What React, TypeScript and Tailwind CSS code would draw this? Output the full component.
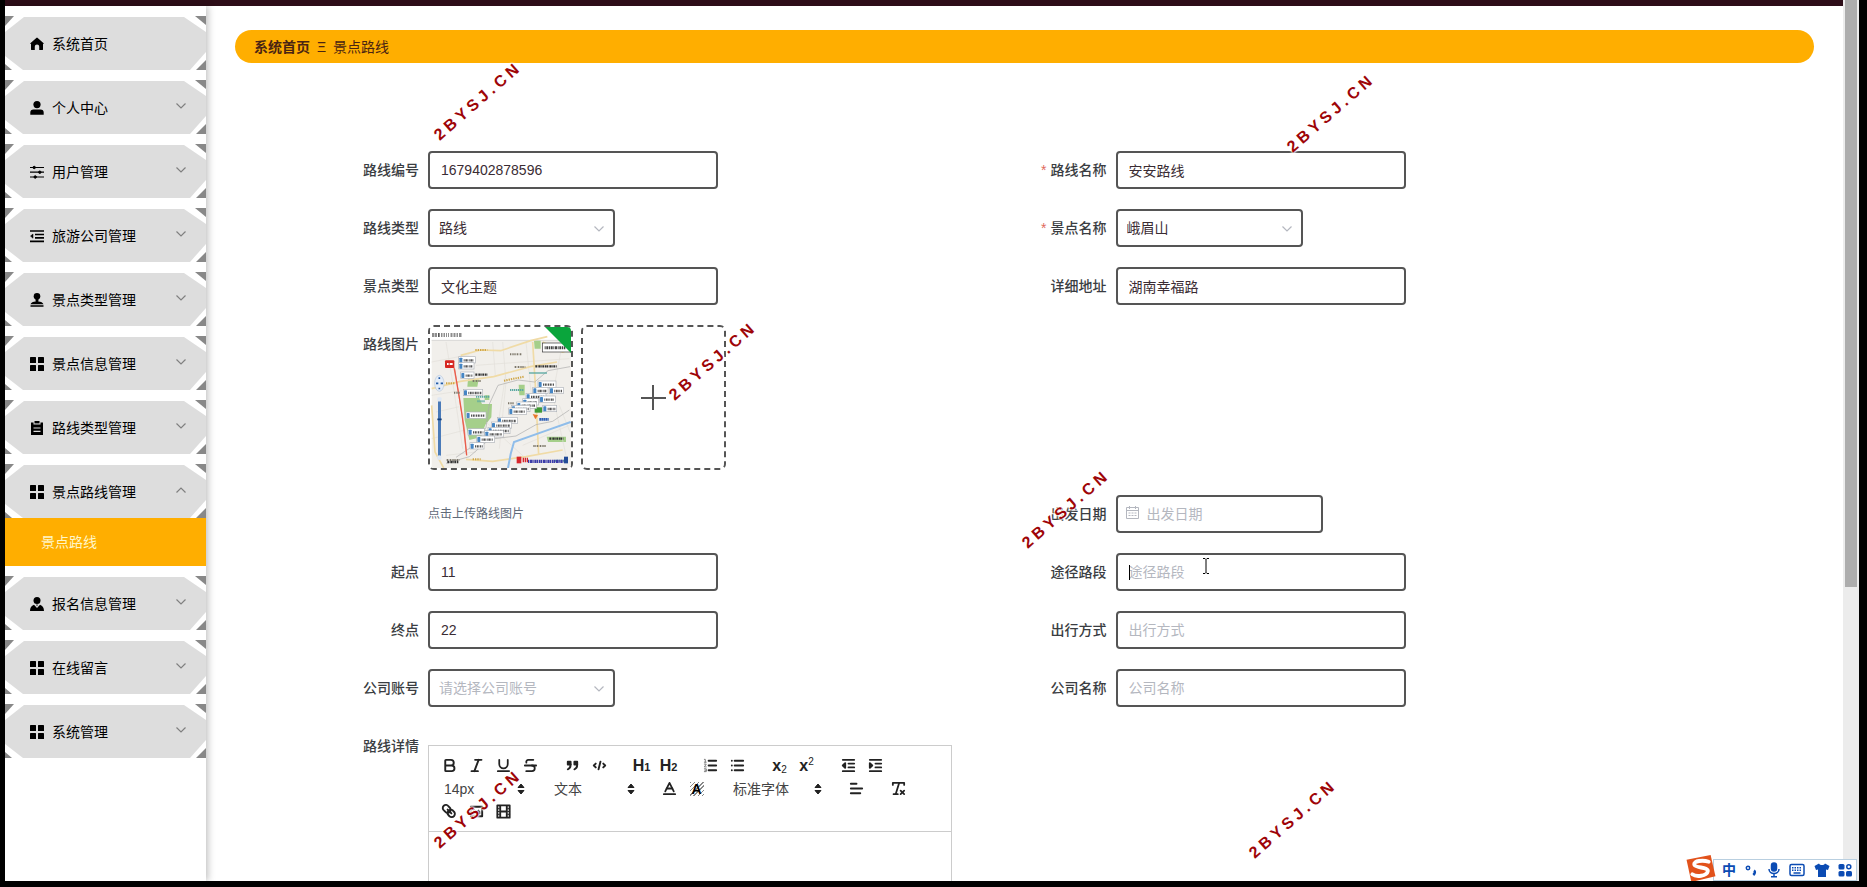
import React from "react";
import {
  Baseline,
  Bold,
  Italic,
  RemoveFormatting,
  Strikethrough,
  Underline,
} from "lucide-react";

interface MenuItem {
  title: string;
  icon: React.ReactNode;
  open?: boolean;
  children?: string[];
  plain?: boolean;
}

const HomeIcon = () => (
  <svg viewBox="0 0 14 14" className="size-[14px] fill-black">
    <path d="M6.300.900a1.100 1.100 0 0 1 1.400 0l5.700 5c.5.500.3 1-.4 1H13v5.300c0 .6-.3.900-.9.900H9.200V9.600a2.200 2.200 0 0 0-4.400 0v3.500H1.900c-.6 0-.9-.3-.9-.9V6.900H.9c-.6 0-.8-.5-.3-1z" />
  </svg>
);

const UserIcon = () => (
  <svg viewBox="0 0 14 14" className="size-[14px] fill-black">
    <circle cx="7" cy="3.600" r="3.600" />
    <path d="M.3 13.800v-2.200A3.200 3.200 0 0 1 3.500 8.400h7a3.200 3.200 0 0 1 3.200 3.200v2.200z" />
  </svg>
);

const OperationIcon = () => (
  <svg viewBox="0 0 14 14" className="size-[14px] fill-black stroke-black">
    <path d="M0 2.500h14M0 7.200h14M0 12h14" strokeWidth="1.200" />
    <circle cx="4.200" cy="2.500" r="1.200" />
    <circle cx="9.800" cy="7.200" r="1.200" />
    <circle cx="5.200" cy="12" r="1.200" />
  </svg>
);

const FoldIcon = () => (
  <svg viewBox="0 0 14 14" className="size-[14px] fill-black stroke-black">
    <path d="M0 2h14M5 5.500h9M5 8.800h9M0 12.300h14" strokeWidth="1.700" />
    <path d="M3 5v4.200L.5 7.100z" strokeWidth="0.500" />
  </svg>
);

const StampIcon = () => (
  <svg viewBox="0 0 14 14" className="size-[14px] fill-black">
    <circle cx="7" cy="3.300" r="3.300" />
    <path d="M5.300 5h3.400l-.4 3.400c2.700.3 4.600 1 5.200 2.800H.5C1.100 9.400 3 8.700 5.700 8.400zM.5 12.300h13v1.500H.5z" />
  </svg>
);

const GridIcon = () => (
  <svg viewBox="0 0 14 14" className="size-[14px] fill-black">
    <rect x="0" y="0" width="6" height="6" rx="0.600" />
    <rect x="8" y="0" width="6" height="6" rx="0.600" />
    <rect x="0" y="8" width="6" height="6" rx="0.600" />
    <rect x="8" y="8" width="6" height="6" rx="0.600" />
  </svg>
);

const OrderIcon = () => (
  <svg viewBox="0 0 14 14" className="size-[14px]">
    <path d="M1 1.500h2.500V3.500h7V1.500H13V14H1z" fill="#000" />
    <rect x="4.500" y="0" width="5" height="2.400" fill="#000" />
    <path d="M3.500 7h7M3.500 10.300h7" stroke="#ddd" strokeWidth="1.200" />
  </svg>
);

const CustomIcon = () => (
  <svg viewBox="0 0 14 14" className="size-[14px] fill-black">
    <circle cx="7" cy="3.500" r="3.500" />
    <path d="M0 14c0-3.200 1.300-5.300 4-6.200L7 11l3-3.200c2.700.9 4 3 4 6.200z" />
    <path d="M6.200 7.600h1.600L7 9.600z" />
  </svg>
);

const menu: MenuItem[] = [
  { title: "系统首页", icon: <HomeIcon />, plain: true },
  { title: "个人中心", icon: <UserIcon /> },
  { title: "用户管理", icon: <OperationIcon /> },
  { title: "旅游公司管理", icon: <FoldIcon /> },
  { title: "景点类型管理", icon: <StampIcon /> },
  { title: "景点信息管理", icon: <GridIcon /> },
  { title: "路线类型管理", icon: <OrderIcon /> },
  { title: "景点路线管理", icon: <GridIcon />, open: true, children: ["景点路线"] },
  { title: "报名信息管理", icon: <CustomIcon /> },
  { title: "在线留言", icon: <GridIcon /> },
  { title: "系统管理", icon: <GridIcon /> },
];

const Chevron = ({ className }: { className: string }) => (
  <svg viewBox="0 0 12 8" fill="none" strokeWidth="1.200" className={className}>
    <path d="M1.500 1.500 6 6l4.500-4.500" />
  </svg>
);

const Sidebar = () => (
  <aside className="relative z-10 w-[201px] shrink-0 bg-white shadow-[2px_0_7px_rgba(0,0,0,0.25)]">
    <ul className="flex flex-col gap-[10px] pt-[10px]">
      {menu.map((item) => (
        <li key={item.title}>
          <div className="h-[54px] bg-[#888]">
            <div className="h-full bg-white [clip-path:polygon(9px_0,calc(100%-11px)_0,100%_9px,100%_calc(100%-10px),calc(100%-10px)_100%,7px_100%,0_calc(100%-6px),0_10px)]">
              <button
                type="button"
                className="flex h-full w-full items-center bg-[#ddd] pt-px pr-[19px] pl-[25px] text-sm text-black [clip-path:polygon(19px_1px,calc(100%-22px)_1px,100%_16px,100%_calc(100%-18px),calc(100%-16px)_100%,18px_100%,0_calc(100%-14px),0_16px)]"
              >
                {item.icon}
                <span className="ml-2">{item.title}</span>
                {!item.plain && (
                  <Chevron
                    className={
                      item.open
                        ? "mb-1 ml-auto h-2 w-3 rotate-180 stroke-[#808080]"
                        : "mb-1 ml-auto h-2 w-3 stroke-[#808080]"
                    }
                  />
                )}
              </button>
            </div>
          </div>
          {item.children?.map((child) => (
            <a
              key={child}
              href="#route"
              className="flex h-[48px] items-center bg-[#ffae00] pl-9 text-sm text-[#fff6c8]"
            >
              {child}
            </a>
          ))}
        </li>
      ))}
    </ul>
  </aside>
);

interface FieldProps {
  id: string;
  label: string;
  required?: boolean;
  children: React.ReactNode;
}

const Field: React.FC<FieldProps> = ({ id, label, required, children }) => (
  <div className="mb-5 flex items-start">
    <label
      htmlFor={id}
      className="w-[92px] shrink-0 pr-[9px] text-right text-sm leading-[38px] font-medium whitespace-nowrap text-[#3a3d42]"
    >
      {required && <span className="mr-1 text-[#e06a5c]">*</span>}
      {label}
    </label>
    {children}
  </div>
);

const inputClass =
  "h-[38px] rounded border-2 border-[#555] bg-white px-[11px] text-sm text-[#3a2c33] outline-none placeholder:text-[#b4b7bf]";

interface TextProps {
  id: string;
  label: string;
  value?: string;
  required?: boolean;
}

const TextField: React.FC<TextProps> = ({ id, label, value, required }) => (
  <Field id={id} label={label} required={required}>
    <input
      id={id}
      type="text"
      defaultValue={value}
      placeholder={label}
      className={`${inputClass} w-[290px]`}
    />
  </Field>
);

const SelectField: React.FC<TextProps> = ({ id, label, value, required }) => (
  <Field id={id} label={label} required={required}>
    <div className="relative">
      <select
        id={id}
        className={
          value
            ? "h-[38px] w-[187px] appearance-none rounded border-2 border-[#555] bg-white px-[9px] text-sm text-[#3a2c33]"
            : "h-[38px] w-[187px] appearance-none rounded border-2 border-[#555] bg-white px-[9px] text-sm text-[#b4b7bf]"
        }
      >
        <option>{value || "请选择公司账号"}</option>
      </select>
      <Chevron className="pointer-events-none absolute top-[16px] right-[10px] h-2 w-3 stroke-[#b4b7bf]" />
    </div>
  </Field>
);

// x, y, width of the stop labels on the map
const stops = [
  [98, 104, 50], [98, 122, 46], [104, 150, 40], [112, 202, 58], [120, 270, 60],
  [336, 177, 54], [320, 196, 46], [370, 196, 42], [300, 214, 60], [290, 230, 48],
  [340, 222, 48], [272, 240, 60], [256, 250, 56], [350, 250, 42], [248, 258, 54],
  [214, 286, 60], [196, 300, 60], [126, 320, 50], [186, 316, 66], [176, 326, 56],
  [152, 342, 54], [132, 362, 42],
];

const MapPicture = () => (
  <svg viewBox="12 15 423 423" preserveAspectRatio="none" className="h-full w-full">
    <rect x="12" y="15" width="423" height="423" fill="#fff" />
    <rect x="17" y="54" width="418" height="384" fill="#f1efeb" />
    <path d="M17 55h400" stroke="#ccc" strokeWidth="2" />
    <path
      d="M19 39h6M28 39h5M36 39h6M46 39h3M53 39h3M60 39h2M66 39h2M74 39h5M83 39h5M92 39h4M100 39h6"
      stroke="#555"
      strokeWidth="12"
      strokeDasharray="3 1"
    />
    <g fill="#a5cf8a">
      <path d="M112 228h48l8 18h30l-2 40-18 22-14 38-34 8-14-60z" />
      <path d="M126 172h32l-4 22h-30zM278 188h18v32h-16zM324 56h20v24h-18zM362 344h58v16h-54zM176 220h14v14h-14z" />
    </g>
    <g stroke="#e3e0da" strokeWidth="2" fill="none">
      <path d="M17 120 130 98M30 270l70-16M60 60l20 120 30 200M230 60l10 120-20 200M300 60l16 160M17 350l100-26M180 300l120 110M410 60l-30 160 40 180" />
      <path d="M200 60l8 100M17 220l90-14M150 130l280-20M240 150l-30 200M290 370l140-60M60 400l90-10M400 250l32 80" />
    </g>
    <g stroke="#f0dba6" strokeWidth="5" fill="none">
      <path d="M104 100l60-16 60 2 90-30 50-12M17 200l86-22 100-14 110-30 80-14M17 250l10 140 26 48M120 412l80 6 100-14 110-20M320 60l8 130 10 210M350 60l60 30 22-8" />
    </g>
    <g stroke="#aaa" strokeWidth="2" fill="none">
      <path d="M90 406l60-40 30-50 10-70 26-56 60-16 50 6 40-34 66-12" />
      <path d="M60 424l70-20 60-52 80-10 60-34 50-10 50-34" />
    </g>
    <path d="M434 300l-80 28-90 32-10 36-8 42" stroke="#8fbdea" strokeWidth="6" fill="none" />
    <path d="M84 136l16 90 14 90 8 84" stroke="#ef7565" strokeWidth="4" fill="none" />
    <path d="M86 140l22 140 14 120" stroke="#e34a38" strokeWidth="2" fill="none" />
    <g stroke="#7d776a" strokeWidth="6" strokeDasharray="4 2 2 2">
      <path d="M252 97h34M266 135h32M140 177h26M84 212h20M322 372h38M246 244h20M62 414h40" />
    </g>
    <g stroke="#333" strokeWidth="7" strokeDasharray="5 2 3 1">
      <path d="M328 133h64M148 158h36M370 350h42M64 420h34" />
    </g>
    <path d="M148 84h36M234 176l60-12M60 184h26M140 412h24" stroke="#cfa545" strokeWidth="6" strokeDasharray="4 3" />
    <path d="M150 224h40M154 238h22M252 204h40M310 153h54M386 416h28" stroke="#5aa8a2" strokeWidth="6" strokeDasharray="4 2" />
    <path d="M340 292h28" stroke="#2f5fb5" strokeWidth="8" strokeDasharray="5 1" />
    <rect x="57" y="115" width="28" height="23" rx="3" fill="#d62722" />
    <path d="M63 126h5M71 126h9" stroke="#fff" strokeWidth="6" />
    <rect x="326" y="256" width="22" height="16" fill="#3f9a35" />
    <path d="M320 276l16 4-8 12z" fill="#e8772c" />
    {stops.map(([x, y, w]) => (
      <g key={`${x}-${y}`}>
        <rect x={x} y={y} width={w} height="19" fill="#fff" stroke="#b0b4ba" strokeWidth="2" />
        <rect x={x + 2} y={y + 3} width="9" height="15" rx="2" fill="#4686c4" />
        <path
          d={`M${x + 15} ${y + 11}h${w - 19}`}
          stroke="#555"
          strokeWidth="7"
          strokeDasharray="3 2 5 1 2 2"
        />
      </g>
    ))}
    <rect x="349" y="63" width="90" height="27" fill="#fff" stroke="#333" strokeWidth="2" />
    <path d="M356 77h62" stroke="#444" strokeWidth="9" strokeDasharray="3 2 6 2" />
    <ellipse cx="40" cy="184" rx="14" ry="24" fill="#e5edf7" stroke="#8aa3c4" />
    <path d="M40 166v5M40 197v5M30 184h7M44 184h7" stroke="#225ba8" strokeWidth="5" />
    <rect x="36" y="238" width="9" height="164" fill="#4a7ab8" />
    <rect x="34" y="226" width="13" height="12" rx="4" fill="#dfe8f4" />
    <path d="M34 292h13" stroke="#123f7c" strokeWidth="5" />
    <circle cx="40" cy="407" r="7" fill="#dfe8f4" />
    <rect x="272" y="404" width="14" height="20" fill="#d8262c" />
    <path d="M290 414h16" stroke="#d8262c" strokeWidth="14" strokeDasharray="4 2" />
    <path d="M306 418h106" stroke="#3b3ba8" strokeWidth="10" strokeDasharray="4 2 6 1" />
    <rect x="414" y="404" width="12" height="20" fill="#234b96" />
    <path d="M357 15h78v78z" fill="#0aa53c" />
  </svg>
);

const RouteImages = () => (
  <div className="flex gap-2">
    <div className="size-[145px] overflow-hidden rounded-md border-2 border-dashed border-[#555]">
      <MapPicture />
    </div>
    <button
      id="images"
      type="button"
      aria-label="上传"
      className="flex size-[145px] items-center justify-center rounded-md border-2 border-dashed border-[#555]"
    >
      <svg viewBox="0 0 25 25" className="size-[25px] stroke-[#555]" strokeWidth="2">
        <path d="M12 0v25M0 13h25" />
      </svg>
    </button>
  </div>
);

const ToolButton = ({ name, children }: { name: string; children: React.ReactNode }) => (
  <button
    type="button"
    aria-label={name}
    className="flex h-[23px] w-[27px] items-center justify-center text-[#222]"
  >
    {children}
  </button>
);

const Glyph = ({ children }: { children: React.ReactNode }) => (
  <svg
    viewBox="0 0 18 18"
    fill="none"
    stroke="currentColor"
    strokeWidth="2"
    strokeLinecap="round"
    strokeLinejoin="round"
    className="size-[17px]"
  >
    {children}
  </svg>
);

const Picker = ({ label, name, className }: { label: string; name: string; className: string }) => (
  <div className={`relative h-[23px] ${className}`}>
    <select
      aria-label={name}
      className="h-full w-full appearance-none bg-white pl-2 text-sm text-[#444]"
    >
      <option>{label}</option>
    </select>
    <svg viewBox="0 0 8 12" className="absolute top-[6px] right-[6px] h-3 w-2 fill-[#222]">
      <path d="M4 1 7 4.500H1zM4 11 7 7.500H1z" stroke="#222" strokeLinejoin="round" />
    </svg>
  </div>
);

const Editor = () => (
  <div className="mt-[18px] w-[524px] border border-[#ccc]">
    <div className="flex flex-wrap gap-x-[15px] border-b border-[#ccc] px-[7px] py-2">
      <div className="flex">
        <ToolButton name="加粗"><Bold size={17} strokeWidth={2.7} /></ToolButton>
        <ToolButton name="斜体"><Italic size={17} strokeWidth={2.7} /></ToolButton>
        <ToolButton name="下划线"><Underline size={17} strokeWidth={2.5} /></ToolButton>
        <ToolButton name="删除线"><Strikethrough size={17} strokeWidth={2.5} /></ToolButton>
      </div>
      <div className="flex">
        <ToolButton name="引用">
          <Glyph>
            <path d="M4 5h3v3H4zM11 5h3v3h-3z" fill="currentColor" />
            <path d="M7 8c0 4-3 5-3 5M14 8c0 4-3 5-3 5" />
          </Glyph>
        </ToolButton>
        <ToolButton name="代码">
          <Glyph>
            <path d="M5 7 3 9l2 2M13 7l2 2-2 2M10 5 8 13" />
          </Glyph>
        </ToolButton>
      </div>
      <div className="flex">
        <ToolButton name="标题一">
          <span className="text-base leading-none font-bold">H</span>
          <span className="pt-1 text-[11px] leading-none font-bold">1</span>
        </ToolButton>
        <ToolButton name="标题二">
          <span className="text-base leading-none font-bold">H</span>
          <span className="pt-1 text-[11px] leading-none font-bold">2</span>
        </ToolButton>
      </div>
      <div className="flex">
        <ToolButton name="有序列表">
          <Glyph>
            <path d="M7 4h8M7 9h8M7 14h8" />
            <path
              d="M2.500 2.500h1v3M2.500 5.500h2M2.500 7.500h2l-2 3h2M2.500 12.500h2v3h-2M3 14h1.500"
              strokeWidth="1"
              stroke="#777"
            />
          </Glyph>
        </ToolButton>
        <ToolButton name="无序列表">
          <Glyph>
            <path d="M6 4h9M6 9h9M6 14h9M3 4h0M3 9h0M3 14h0" />
          </Glyph>
        </ToolButton>
      </div>
      <div className="flex">
        <ToolButton name="下标">
          <span className="text-base leading-none font-bold">x</span>
          <span className="pt-2 text-[10px] leading-none">2</span>
        </ToolButton>
        <ToolButton name="上标">
          <span className="text-base leading-none font-bold">x</span>
          <span className="pb-2 text-[10px] leading-none">2</span>
        </ToolButton>
      </div>
      <div className="flex">
        <ToolButton name="减少缩进">
          <Glyph>
            <path d="M3 3h12M3 15h12M9 7h6M9 11h6" />
            <path d="M5.500 6.500v5L3 9z" fill="currentColor" />
          </Glyph>
        </ToolButton>
        <ToolButton name="增加缩进">
          <Glyph>
            <path d="M3 3h12M3 15h12M9 7h6M9 11h6" />
            <path d="M3 6.500v5L5.500 9z" fill="currentColor" />
          </Glyph>
        </ToolButton>
      </div>
      <Picker name="字号" label="14px" className="w-[95px]" />
      <Picker name="标题" label="文本" className="w-[95px]" />
      <div className="flex">
        <ToolButton name="文字颜色">
          <Baseline size={17} strokeWidth={2.5} />
        </ToolButton>
        <ToolButton name="背景颜色">
          <span className="flex size-[14px] items-center justify-center bg-[repeating-linear-gradient(135deg,#888_0_1px,#fff_1px_3px)] text-sm leading-none font-bold text-black">
            A
          </span>
        </ToolButton>
      </div>
      <Picker name="字体" label="标准字体" className="w-[103px]" />
      <ToolButton name="对齐">
        <Glyph>
          <path d="M3 9h12M3 14h10M3 4h6" />
        </Glyph>
      </ToolButton>
      <ToolButton name="清除格式"><RemoveFormatting size={17} strokeWidth={2.5} /></ToolButton>
      <div className="flex">
        <ToolButton name="链接">
          <Glyph>
            <path d="M7 7l4 4" />
            <path d="M8.900 4.600a3.500 3.500 0 0 1 .4 5A3.500 3.500 0 0 1 4.300 9l-1-1A3.300 3.300 0 1 1 8 3.600z" />
            <path d="M13.600 9a3.300 3.300 0 1 1-4.600 5l-1-1a3.400 3.400 0 0 1 4.600-5z" />
          </Glyph>
        </ToolButton>
        <ToolButton name="图片">
          <Glyph>
            <rect x="3" y="4" width="12" height="10" />
            <circle cx="6" cy="7" r="1" fill="currentColor" strokeWidth="0" />
            <path d="M5 12v-1l2-2 1 1 3-3 2 2v3z" fill="currentColor" strokeWidth="0" />
          </Glyph>
        </ToolButton>
        <ToolButton name="视频">
          <Glyph>
            <path d="M2.500 2.500h13v13h-13z" />
            <path d="M5.500 3v12M12.500 3v12M6 9h6" />
            <path d="M2.500 6h2M2.500 9h2M2.500 12h2M13.500 6h2M13.500 9h2M13.500 12h2" strokeWidth="1" />
          </Glyph>
        </ToolButton>
      </div>
    </div>
    <div id="detail" contentEditable suppressContentEditableWarning className="h-[200px] outline-none" />
  </div>
);

const RouteForm = () => (
  <form className="mt-[88px] grid grid-cols-2 pr-[103px] pl-[101px]">
    <TextField id="code" label="路线编号" value="1679402878596" />
    <TextField id="name" label="路线名称" value="安安路线" required />
    <SelectField id="type" label="路线类型" value="路线" />
    <SelectField id="spot" label="景点名称" value="峨眉山" required />
    <TextField id="spotType" label="景点类型" value="文化主题" />
    <TextField id="address" label="详细地址" value="湖南幸福路" />
    <div className="col-span-2 h-[170px]">
      <Field id="images" label="路线图片">
        <RouteImages />
      </Field>
    </div>
    <p className="ml-[92px] text-xs leading-[38px] text-[#606a78]">点击上传路线图片</p>
    <Field id="date" label="出发日期">
      <div className="relative">
        <input
          id="date"
          type="text"
          placeholder="出发日期"
          className="h-[38px] w-[207px] rounded border-2 border-[#555] bg-white pl-[29px] text-sm outline-none placeholder:text-[#b4b7bf]"
        />
        <svg
          viewBox="0 0 13 13"
          fill="none"
          className="absolute top-[11px] left-[10px] size-[13px] stroke-[#b4b7bf]"
        >
          <path d="M.5 1.500h12v11H.5zM.5 4.500h12M3.500 0v3M9.500 0v3" />
          <path d="M2.500 7h8M2.500 9.500h8" strokeDasharray="2 1" />
        </svg>
      </div>
    </Field>
    <TextField id="start" label="起点" value="11" />
    <Field id="path" label="途径路段">
      <div className="relative">
        <input id="path" type="text" placeholder="途径路段" className={`${inputClass} w-[290px]`} />
        <span className="absolute top-3 left-[13px] h-[15px] w-px bg-black" />
        <svg
          viewBox="0 0 8 16"
          fill="none"
          className="absolute top-[5px] left-[86px] h-4 w-2 stroke-black"
        >
          <path d="M1 .5h2l1 1 1-1h2M4 1.500v13M1 15.500h2l1-1 1 1h2" />
        </svg>
      </div>
    </Field>
    <TextField id="end" label="终点" value="22" />
    <TextField id="travel" label="出行方式" />
    <SelectField id="account" label="公司账号" />
    <TextField id="company" label="公司名称" />
    <Field id="detail" label="路线详情">
      <Editor />
    </Field>
  </form>
);

const InputMethodBar = () => (
  <div className="absolute right-[2px] bottom-0 z-20 flex h-[22px] w-[144px] items-center justify-between border border-[#b9cfe0] bg-white pr-1 pl-2 text-[#0b4bb3]">
    <svg viewBox="0 0 32 28" className="absolute -top-[5px] -left-[29px] h-[27px] w-8">
      <path d="M1 5 26 0l5 22-25 6z" fill="#e2521b" />
      <path
        d="M24 7c-6-2-16-1-15 3s15 2 14 7-12 6-16 3"
        fill="none"
        stroke="#fff"
        strokeWidth="4"
        strokeLinecap="round"
      />
    </svg>
    <span className="text-sm font-bold">中</span>
    <svg viewBox="0 0 14 14" className="size-[14px]" fill="none" stroke="currentColor" strokeWidth="1.500">
      <circle cx="4" cy="5" r="1.700" />
      <path d="M10 7.500c1.500 1 1 3-.7 4.500" strokeWidth="2.500" />
    </svg>
    <svg viewBox="0 0 14 16" className="h-4 w-[14px]" fill="none" stroke="currentColor" strokeWidth="1.500">
      <rect x="4.500" y="1" width="5" height="8" rx="2.500" fill="currentColor" />
      <path d="M2 7c0 6 10 6 10 0M7 11.500V15M4 14.800h6" />
    </svg>
    <svg viewBox="0 0 16 14" className="h-[14px] w-4" fill="none" stroke="currentColor" strokeWidth="1.500">
      <rect x="1" y="1.500" width="14" height="11" rx="1.500" />
      <path d="M3 4.700h10M3 7.200h10" strokeDasharray="1.500 1" />
      <path d="M4.500 10h7" />
    </svg>
    <svg viewBox="0 0 16 14" className="h-[14px] w-4" fill="currentColor">
      <path d="M5 .5c1 2 5 2 6 0l4.500 2.500-1.500 4-2-.5V14H4V6.500L2 7 .5 3z" />
    </svg>
    <svg viewBox="0 0 14 14" className="size-[14px]" fill="currentColor">
      <rect x="0.500" y="1" width="6" height="5.500" rx="1.500" />
      <rect x="0.500" y="8" width="6" height="5.500" rx="1.500" />
      <rect x="8" y="8" width="6" height="5.500" rx="1.500" />
      <circle cx="10.800" cy="3.800" r="2" fill="none" stroke="currentColor" strokeWidth="1.500" />
    </svg>
  </div>
);

const markClass =
  "pointer-events-none absolute z-30 -translate-x-1/2 -translate-y-1/2 rotate-[-41deg] text-base font-bold tracking-[4px] whitespace-nowrap text-[#9e0508] [text-shadow:0_0_2px_#fff,0_0_2px_#fff,0_0_3px_#fff,0_0_3px_#fff]";

const Watermarks = () => (
  <div aria-hidden="true">
    <span className={`${markClass} top-[101px] left-[478px]`}>2BYSJ.CN</span>
    <span className={`${markClass} top-[113px] left-[1331px]`}>2BYSJ.CN</span>
    <span className={`${markClass} top-[361px] left-[713px]`}>2BYSJ.CN</span>
    <span className={`${markClass} top-[509px] left-[1066px]`}>2BYSJ.CN</span>
    <span className={`${markClass} top-[809px] left-[478px]`}>2BYSJ.CN</span>
    <span className={`${markClass} top-[819px] left-[1293px]`}>2BYSJ.CN</span>
  </div>
);

const App: React.FC = () => {
  return (
    <div className="relative h-screen overflow-hidden bg-black pr-2 pb-[6px] pl-[5px] font-['Liberation_Sans','Noto_Sans_CJK_SC',sans-serif]">
      <div className="relative flex h-full overflow-hidden bg-white">
        <div className="flex min-w-0 flex-1 flex-col">
          <header className="h-[6px] shrink-0 bg-[#2d0d18]" />
          <div className="flex min-h-0 flex-1">
            <Sidebar />
            <main className="min-w-0 flex-1 overflow-hidden px-[29px] pt-6">
              <nav className="flex h-[33px] items-center rounded-full bg-[#ffae00] pl-[19px] text-sm text-[#4a2413]">
                <a href="#home" className="font-bold">系统首页</a>
                <span className="mx-[7px]">Ξ</span>
                <span>景点路线</span>
              </nav>
              <RouteForm />
            </main>
          </div>
        </div>
        <div className="w-4 shrink-0 bg-[#ececec] px-[2px]">
          <div className="h-2/3 bg-[#adadad]" />
        </div>
        <InputMethodBar />
      </div>
      <Watermarks />
    </div>
  );
};

export default App;
